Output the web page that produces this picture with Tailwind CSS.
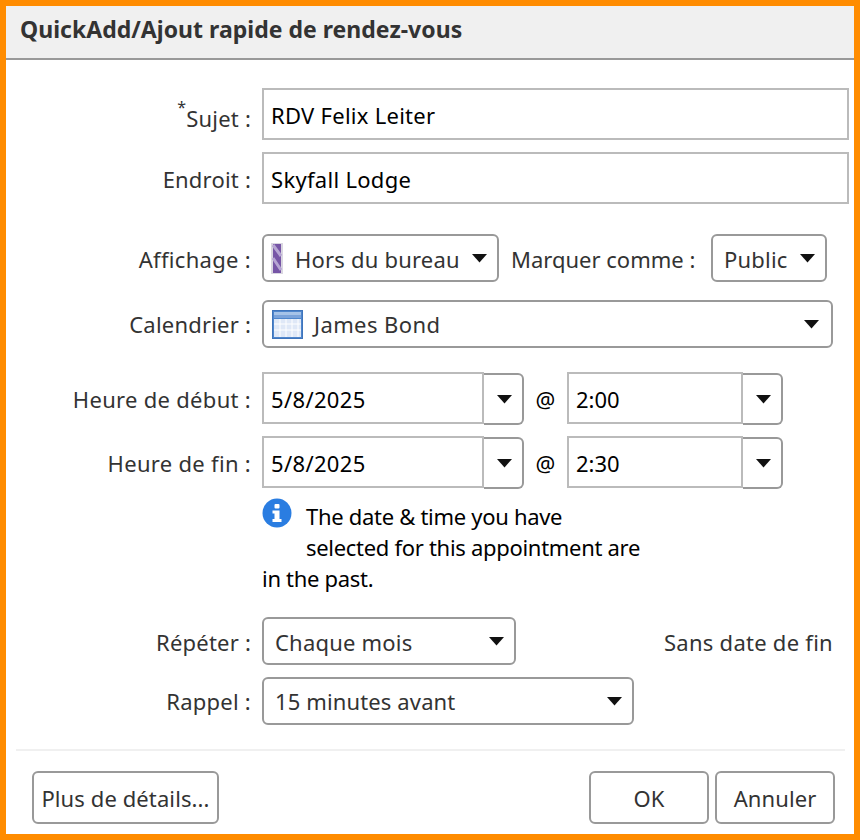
<!DOCTYPE html>
<html lang="fr">
<head>
  <meta charset="UTF-8" />
  <title>QuickAdd</title>
  <script src="https://cdn.jsdelivr.net/npm/@tailwindcss/browser@4"></script>
</head>
<body class="m-0 bg-white">
  <div class="w-[860px] h-[840px] border-[6px] border-[#ff8c00] bg-white flex flex-col overflow-hidden text-[22px] leading-[30px] text-[#333] font-['Noto_Sans','Open_Sans',sans-serif]">
    <!-- titre -->
    <div class="h-[54px] shrink-0 bg-[#f0f0f0] border-b-2 border-[#999] pl-[14px] pt-[8px] font-bold text-[23px] tracking-[0.02px] text-[#333]">QuickAdd/Ajout rapide de rendez-vous</div>

    <div class="flex flex-col pl-[10px] pr-[9px]">
      <div class="flex items-center mt-[28px]">
        <div class="w-[235px] shrink-0 text-right pt-[7px] tracking-[0.2px]"><sup class="text-[16px] leading-none align-[6px]">*</sup>Sujet :</div>
        <div class="ml-[11px] w-[587px] shrink-0 h-[52px] border-2 border-[#bbb] pl-[7px] pt-[1px] flex items-center text-black tracking-[0.27px]">RDV Felix Leiter</div>
      </div>
      <div class="flex items-center mt-[12px]">
        <div class="w-[235px] shrink-0 text-right tracking-[0.2px] pt-[1px]">Endroit :</div>
        <div class="ml-[11px] w-[587px] shrink-0 h-[52px] border-2 border-[#bbb] pl-[7px] pt-[1px] flex items-center text-black tracking-[0.3px]">Skyfall Lodge</div>
      </div>

      <div class="flex items-center mt-[30px]">
        <div class="w-[235px] shrink-0 text-right tracking-[0.3px] pt-[1px]">Affichage :</div>
        <div class="ml-[11px] w-[237px] shrink-0 h-[48px] border-2 border-[#999] rounded-[6px] flex items-center pl-[7px] tracking-[0.2px]">
          <svg width="12" height="31" viewBox="0 0 12 31" class="shrink-0">
            <rect width="12" height="31" fill="#d9d6e0"/>
            <rect x="2" y="1" width="8" height="29" fill="#7655a6"/>
            <path d="M2 2 L10 13 M2 15 L10 27" stroke="#b6a5d3" stroke-width="3"/>
          </svg>
          <span class="ml-[12px] pt-[1px] whitespace-nowrap">Hors du bureau</span>
          <svg width="15" height="9" viewBox="0 0 15 9" class="ml-auto mr-[10px] shrink-0"><path d="M0 0 H15 L7.5 8.5 Z" fill="#111"/></svg>
        </div>
        <div class="ml-[12px] whitespace-nowrap w-[200px] shrink-0 pt-[1px]">Marquer comme :</div>
        <div class="w-[116px] shrink-0 h-[48px] border-2 border-[#999] rounded-[6px] flex items-center pl-[11px] tracking-[0.2px]">
          <span class="pt-[1px]">Public</span>
          <svg width="15" height="9" viewBox="0 0 15 9" class="ml-auto mr-[10px] shrink-0"><path d="M0 0 H15 L7.5 8.5 Z" fill="#111"/></svg>
        </div>
      </div>

      <div class="flex items-center mt-[18px]">
        <div class="w-[235px] shrink-0 text-right tracking-[0.2px]">Calendrier :</div>
        <div class="ml-[11px] w-[571px] shrink-0 h-[48px] border-2 border-[#999] rounded-[6px] flex items-center pl-[8px] tracking-[0.4px]">
          <svg width="31" height="29" viewBox="0 0 31 29" class="shrink-0">
            <rect x="0.5" y="0.5" width="30" height="28" fill="#4f86cc" stroke="#3f74bb"/>
            <rect x="2" y="2" width="27" height="3" fill="#a6c3e8"/>
            <rect x="2" y="5" width="27" height="3" fill="#7ba3da"/>
            <rect x="2" y="9" width="27" height="18" fill="#dfe8f7"/>
            <path d="M8 9 V27 M14 9 V27 M20 9 V27 M26 9 V27 M2 14 H29 M2 20 H29" stroke="#fff" stroke-width="1"/>
          </svg>
          <span class="ml-[11px]">James Bond</span>
          <svg width="15" height="9" viewBox="0 0 15 9" class="ml-auto mr-[12px] shrink-0"><path d="M0 0 H15 L7.5 8.5 Z" fill="#111"/></svg>
        </div>
      </div>

      <div class="flex items-center mt-[24px] h-[53px]">
        <div class="w-[235px] shrink-0 text-right tracking-[0.3px]">Heure de début :</div>
        <div class="ml-[11px] w-[222px] shrink-0 h-[52px] self-start pt-[1px] border-2 border-[#bbb] pl-[7px] flex items-center text-black tracking-[0.35px]">5/8/2025</div>
        <div class="w-[40px] shrink-0 h-[52px] self-end border-2 border-l-0 border-[#999] rounded-r-[6px] flex items-center justify-center pl-[2px]">
          <svg width="15" height="9" viewBox="0 0 15 9"><path d="M0 0 H15 L7.5 8.5 Z" fill="#111"/></svg>
        </div>
        <div class="w-[43px] shrink-0 text-center text-black">@</div>
        <div class="w-[176px] shrink-0 h-[52px] self-start pt-[1px] border-2 border-[#bbb] pl-[7px] flex items-center text-black">2:00</div>
        <div class="w-[40px] shrink-0 h-[52px] self-end border-2 border-l-0 border-[#999] rounded-r-[6px] flex items-center justify-center pl-[2px]">
          <svg width="15" height="9" viewBox="0 0 15 9"><path d="M0 0 H15 L7.5 8.5 Z" fill="#111"/></svg>
        </div>
      </div>
      <div class="flex items-center mt-[11px] h-[53px]">
        <div class="w-[235px] shrink-0 text-right tracking-[0.3px]">Heure de fin :</div>
        <div class="ml-[11px] w-[222px] shrink-0 h-[52px] self-start pt-[1px] border-2 border-[#bbb] pl-[7px] flex items-center text-black tracking-[0.35px]">5/8/2025</div>
        <div class="w-[40px] shrink-0 h-[52px] self-end border-2 border-l-0 border-[#999] rounded-r-[6px] flex items-center justify-center pl-[2px]">
          <svg width="15" height="9" viewBox="0 0 15 9"><path d="M0 0 H15 L7.5 8.5 Z" fill="#111"/></svg>
        </div>
        <div class="w-[43px] shrink-0 text-center text-black">@</div>
        <div class="w-[176px] shrink-0 h-[52px] self-start pt-[1px] border-2 border-[#bbb] pl-[7px] flex items-center text-black">2:30</div>
        <div class="w-[40px] shrink-0 h-[52px] self-end border-2 border-l-0 border-[#999] rounded-r-[6px] flex items-center justify-center pl-[2px]">
          <svg width="15" height="9" viewBox="0 0 15 9"><path d="M0 0 H15 L7.5 8.5 Z" fill="#111"/></svg>
        </div>
      </div>

      <!-- avertissement -->
      <div class="ml-[246px] mt-[12px] w-[400px] text-black leading-[31px] tracking-[-0.3px]">
        <svg width="30" height="30" viewBox="0 0 30 30" class="float-left mr-[14px] mt-[-3px]">
          <circle cx="15" cy="15" r="14.5" fill="#2a7de1"/>
          <rect x="12.5" y="6" width="5" height="4.5" rx="1" fill="#fff"/>
          <path d="M10.5 12.5 H17.5 V21 H19.5 V24 H10.5 V21 H12.5 V15.5 H10.5 Z" fill="#fff"/>
        </svg>
        The date &amp; time you have<br /><span class="ml-[44px]">selected for this appointment are</span><br />in the past.
      </div>

      <div class="flex items-center mt-[23px]">
        <div class="w-[235px] shrink-0 text-right tracking-[0.2px] pt-[1px]">Répéter :</div>
        <div class="ml-[11px] w-[254px] shrink-0 h-[48px] border-2 border-[#999] rounded-[6px] flex items-center pl-[11px] tracking-[0.2px]">
          <span class="pt-[1px]">Chaque mois</span>
          <svg width="15" height="9" viewBox="0 0 15 9" class="ml-auto mr-[10px] shrink-0"><path d="M0 0 H15 L7.5 8.5 Z" fill="#111"/></svg>
        </div>
        <div class="ml-auto pr-[12px] pt-[1px] tracking-[0.27px] whitespace-nowrap">Sans date de fin</div>
      </div>
      <div class="flex items-center mt-[12px]">
        <div class="w-[235px] shrink-0 text-right tracking-[0.25px]">Rappel :</div>
        <div class="ml-[11px] w-[372px] shrink-0 h-[48px] border-2 border-[#999] rounded-[6px] flex items-center pl-[11px] tracking-[0.13px]">
          <span>15 minutes avant</span>
          <svg width="15" height="9" viewBox="0 0 15 9" class="ml-auto mr-[10px] shrink-0"><path d="M0 0 H15 L7.5 8.5 Z" fill="#111"/></svg>
        </div>
      </div>

      <div class="h-[2px] bg-[#f0f0f0] mt-[24px]"></div>

      <div class="flex mt-[20px] pl-[16px]">
        <div class="w-[187px] shrink-0 h-[53px] border-2 border-[#999] rounded-[6px] flex items-center justify-center whitespace-nowrap tracking-[0.1px]">Plus de détails...</div>
        <div class="ml-auto w-[120px] h-[53px] border-2 border-[#999] rounded-[6px] flex items-center justify-center">OK</div>
        <div class="ml-[6px] mr-[10px] w-[120px] h-[53px] border-2 border-[#999] rounded-[6px] flex items-center justify-center tracking-[0.1px]">Annuler</div>
      </div>
    </div>
  </div>
</body>
</html>
